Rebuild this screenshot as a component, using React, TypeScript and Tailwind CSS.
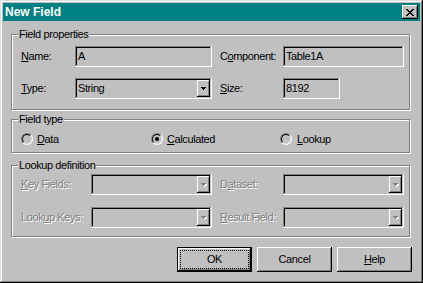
import React from "react";

const raised =
  "shadow-[inset_-1px_-1px_#000,inset_1px_1px_#fff,inset_-2px_-2px_#808080]";
const sunken =
  "shadow-[inset_-1px_-1px_#fff,inset_1px_1px_#808080,inset_-2px_-2px_#c0c0c0,inset_2px_2px_#000]";
const dis = "text-[#808080] [text-shadow:1px_1px_0_#fff]";

function U({ children }: { children: React.ReactNode }) {
  return <span className="underline underline-offset-[1px]">{children}</span>;
}

function Arrow({ disabled }: { disabled?: boolean }) {
  return (
    <svg width="5" height="3" viewBox="0 0 5 3" shapeRendering="crispEdges" overflow="visible" className="overflow-visible">
      {disabled && (
        <g fill="#fff">
          <rect x="1" y="1" width="5" height="1" />
          <rect x="2" y="2" width="3" height="1" />
          <rect x="3" y="3" width="1" height="1" />
        </g>
      )}
      <g fill={disabled ? "#808080" : "#000"}>
        <rect x="0" y="0" width="5" height="1" />
        <rect x="1" y="1" width="3" height="1" />
        <rect x="2" y="2" width="1" height="1" />
      </g>
    </svg>
  );
}

function Edit({ w, value }: { w: string; value: string }) {
  return (
    <div className={`${w} h-[21px] ${sunken} pl-[3px] flex items-center`}>
      {value}
    </div>
  );
}

function Combo({ w, value, disabled }: { w: string; value?: string; disabled?: boolean }) {
  return (
    <div className={`${w} h-[21px] ${sunken} p-[2px] flex`}>
      <div className="flex-1 pl-[1px] flex items-center">{value}</div>
      <div className={`w-[13px] ${raised} flex items-center justify-center`}>
        <Arrow disabled={disabled} />
      </div>
    </div>
  );
}

function Radio({ checked }: { checked?: boolean }) {
  return (
    <span className="w-[12px] h-[12px] shrink-0 rounded-full border border-t-[#808080] border-l-[#808080] border-b-white border-r-white flex items-center justify-center">
      <span className="w-[10px] h-[10px] rounded-full border border-t-black border-l-black border-b-[#dfdfdf] border-r-[#dfdfdf] bg-[#c0c0c0] flex items-center justify-center">
        {checked && <span className="w-[4px] h-[4px] rounded-full bg-black" />}
      </span>
    </span>
  );
}

function Group({
  title,
  className,
  children,
}: {
  title: string;
  className?: string;
  children: React.ReactNode;
}) {
  return (
    <fieldset
      className={`w-[399px] border border-[#808080] shadow-[inset_1px_1px_#fff,1px_1px_#fff] ${className ?? ""}`}
    >
      <legend className="ml-[6px] px-[1px] bg-[#c0c0c0] leading-[13px]">{title}</legend>
      {children}
    </fieldset>
  );
}

function CloseButton() {
  const rows: [number, number][][] = [
    [[0, 2], [6, 2]],
    [[1, 2], [5, 2]],
    [[2, 4]],
    [[3, 2]],
    [[2, 4]],
    [[1, 2], [5, 2]],
    [[0, 2], [6, 2]],
  ];
  return (
    <div className={`w-[16px] h-[14px] bg-[#c0c0c0] ${raised} flex items-start pl-[4px] pt-[4px]`}>
      <svg width="8" height="7" viewBox="0 0 8 7" shapeRendering="crispEdges">
        {rows.map((r, y) =>
          r.map(([x, w], i) => <rect key={`${y}-${i}`} x={x} y={y} width={w} height={1} fill="#000" />)
        )}
      </svg>
    </div>
  );
}

function Button({ children, isDefault }: { children: React.ReactNode; isDefault?: boolean }) {
  if (isDefault) {
    return (
      <div className={`w-[75px] h-[25px] border border-black ${raised} p-[2px] flex`}>
        <div className="flex-1 border border-dotted border-black flex items-center justify-center">
          {children}
        </div>
      </div>
    );
  }
  return (
    <div className={`w-[75px] h-[25px] ${raised} flex items-center justify-center`}>{children}</div>
  );
}

export default function App() {
  return (
    <div className="w-[423px] h-[283px] bg-[#c0c0c0] p-[3px] flex flex-col shadow-[inset_-1px_-1px_#000,inset_1px_1px_#dfdfdf,inset_-2px_-2px_#808080,inset_2px_2px_#fff] font-[family-name:'Liberation_Sans',Arial,sans-serif] text-[11px] leading-[13px] tracking-[-0.4px] text-black">
      <div className="h-[18px] shrink-0 bg-[#008080] flex items-start justify-between pl-[2px] pr-[2px] pt-[2px]">
        <span className="text-white font-bold text-[12px] leading-[14px] tracking-normal">New Field</span>
        <CloseButton />
      </div>

      <div className="flex flex-col pl-[8px]">
        <Group title="Field properties" className="mt-[7px]">
          <div className="pt-[5px] pb-[10px] pl-[9px] flex flex-col gap-[11px]">
            <div className="flex items-center h-[21px]">
              <span className="w-[54px]">
                <U>N</U>ame:
              </span>
              <Edit w="w-[137px]" value="A" />
              <span className="ml-[8px] w-[63px]">
                C<U>o</U>mponent:
              </span>
              <Edit w="w-[121px]" value="Table1A" />
            </div>
            <div className="flex items-center h-[21px]">
              <span className="w-[54px]">
                <U>T</U>ype:
              </span>
              <Combo w="w-[137px]" value="String" />
              <span className="ml-[8px] w-[63px]">
                <U>S</U>ize:
              </span>
              <Edit w="w-[57px]" value="8192" />
            </div>
          </div>
        </Group>

        <Group title="Field type" className="mt-[3px]">
          <div className="pt-[7px] pb-[6px] pl-[9px] grid grid-cols-[130px_129px_1fr] h-[26px] items-start">
            <label className="flex items-start gap-[4px]">
              <Radio />
              <span>
                <U>D</U>ata
              </span>
            </label>
            <label className="flex items-start gap-[4px]">
              <Radio checked />
              <span>
                <U>C</U>alculated
              </span>
            </label>
            <label className="flex items-start gap-[5px]">
              <Radio />
              <span>
                <U>L</U>ookup
              </span>
            </label>
          </div>
        </Group>

        <Group title="Lookup definition" className="mt-[6px]">
          <div className="pt-[2px] pb-[8px] pl-[9px] flex flex-col gap-[12px]">
            <div className="flex items-center h-[21px]">
              <span className={`w-[70px] ${dis}`}>
                <U>K</U>ey Fields:
              </span>
              <Combo w="w-[121px]" disabled />
              <span className={`ml-[8px] w-[63px] ${dis}`}>
                D<U>a</U>taset:
              </span>
              <Combo w="w-[121px]" disabled />
            </div>
            <div className="flex items-center h-[21px]">
              <span className={`w-[70px] ${dis}`}>
                Look<U>u</U>p Keys:
              </span>
              <Combo w="w-[121px]" disabled />
              <span className={`ml-[8px] w-[63px] ${dis}`}>
                <U>R</U>esult Field:
              </span>
              <Combo w="w-[121px]" disabled />
            </div>
          </div>
        </Group>

        <div className="mt-[10px] flex justify-end gap-[5px] pr-[8px]">
          <Button isDefault>OK</Button>
          <Button>Cancel</Button>
          <Button>
            <span>
              <U>H</U>elp
            </span>
          </Button>
        </div>
      </div>
    </div>
  );
}
